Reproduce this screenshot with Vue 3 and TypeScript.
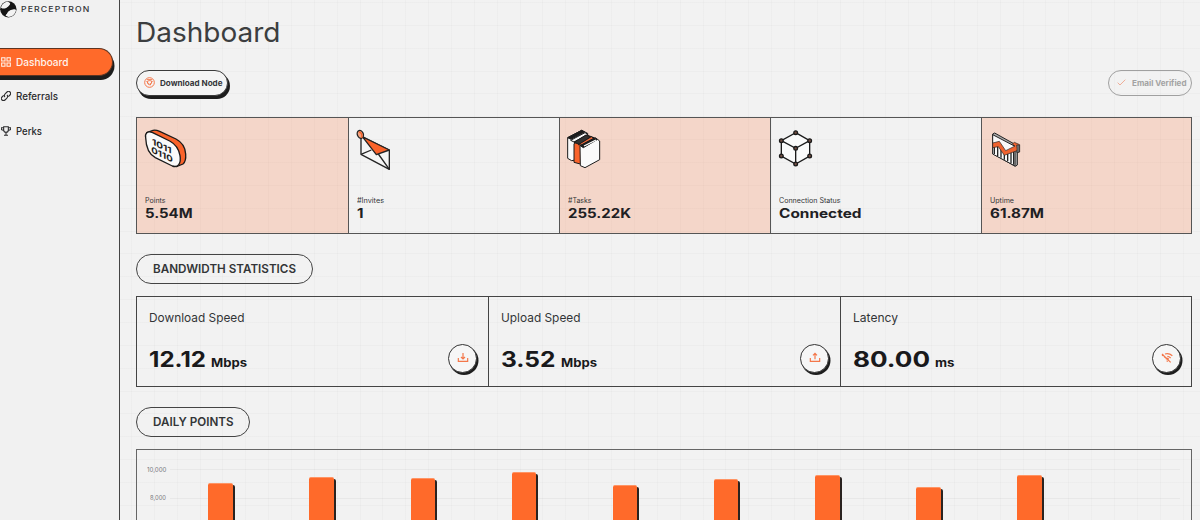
<script setup lang="ts">
interface Fitted { text: string; width: number }
interface Stat { icon: string; label: Fitted; value: Fitted; viewBox: string }
interface Speed { label: Fitted; value: Fitted; unit: Fitted; icon: string }

const nav = [
  { icon: 'grid', text: 'Dashboard', width: 52.5, active: true },
  { icon: 'link', text: 'Referrals', width: 42, active: false },
  { icon: 'cup', text: 'Perks', width: 26, active: false },
]

const stats: Stat[] = [
  { icon: 'points', label: { text: 'Points', width: 20.5 }, value: { text: '5.54M', width: 47.5 }, viewBox: '45 54 144 144' },
  { icon: 'invites', label: { text: '#Invites', width: 27 }, value: { text: '1', width: 6.5 }, viewBox: '34 54 144 144' },
  { icon: 'tasks', label: { text: '#Tasks', width: 23.5 }, value: { text: '255.22K', width: 63 }, viewBox: '39 54 144 144' },
  { icon: 'connection', label: { text: 'Connection Status', width: 61.5 }, value: { text: 'Connected', width: 82.5 }, viewBox: '42 54 144 144' },
  { icon: 'uptime', label: { text: 'Uptime', width: 24 }, value: { text: '61.87M', width: 54 }, viewBox: '45 54 144 144' },
]

const speeds: Speed[] = [
  { label: { text: 'Download Speed', width: 95.5 }, value: { text: '12.12', width: 57 }, unit: { text: 'Mbps', width: 36 }, icon: 'down' },
  { label: { text: 'Upload Speed', width: 79.5 }, value: { text: '3.52', width: 54.5 }, unit: { text: 'Mbps', width: 36 }, icon: 'up' },
  { label: { text: 'Latency', width: 45 }, value: { text: '80.00', width: 77 }, unit: { text: 'ms', width: 19.5 }, icon: 'wifi' },
]

const ticks = [{ text: '10,000', width: 19.5 }, { text: '8,000', width: 16 }]
const bars = [483.3, 477.2, 477.5, 472, 485, 478.5, 475.2, 487.2, 475.2].map((top) => 520 - top)

/* Stretches a label horizontally to the given width, like an expanded typeface. */
const vFit = {
  mounted(el: HTMLElement, binding: { value: number }) {
    const natural = el.getBoundingClientRect().width
    el.style.transform = `scaleX(${binding.value / natural})`
    el.style.marginRight = `${binding.value - natural}px`
  },
}
</script>

<template>
  <div class="app">
    <aside class="side">
      <div class="brand">
        <svg class="logo" viewBox="0 0 51 51">
          <circle cx="25" cy="25" r="24.5" fill="#151515" />
          <path d="M3 20C5 9 14 2 24 2C32 5 33 12 27 17C20 22 10 25 3 20Z" fill="#f3f3f3" />
          <path d="M17 44C19 34 23 29 32 27C40 26 46 22 48 28C46 41 35 48 26 48Z" fill="#f3f3f3" />
          <path d="M19 21C25 17 28 13 31 8L44 12C40 19 36 23 31 27C26 29 22 34 20 40L8 38C9 30 13 24 19 21Z" fill="#151515" />
        </svg>
        <span class="brand-name fit" v-fit="69.5">PERCEPTRON</span>
      </div>
      <nav class="nav">
        <a v-for="n in nav" :key="n.text" class="nav-item" :class="{ active: n.active }">
          <svg v-if="n.icon === 'grid'" class="nav-icon" viewBox="0 0 30 30">
            <path d="M2 2H12V12H2ZM18 2H28V12H18ZM2 18H12V28H2ZM18 18H28V28H18Z" />
          </svg>
          <svg v-else-if="n.icon === 'link'" class="nav-icon" viewBox="0 0 30 30">
            <path d="M12 18C8 14 10 11 13 8L18 3C21 0 25 1 27 3C30 6 29 10 27 12L22 17" />
            <path d="M18 12C22 16 20 19 17 22L12 27C9 30 5 29 3 27C0 24 1 20 3 18L8 13" />
          </svg>
          <svg v-else class="nav-icon" viewBox="0 0 30 30">
            <path d="M8 2H22V12C22 17 19 19 15 19C11 19 8 17 8 12ZM8 5H1V9C1 12 4 13 8 13M22 5H29V9C29 12 26 13 22 13M15 19V27M9 28H21" />
          </svg>
          <span class="fit" v-fit="n.width">{{ n.text }}</span>
        </a>
      </nav>
    </aside>

    <main class="main">
      <h1 class="title"><span class="fit" v-fit="144.5">Dashboard</span></h1>
      <div class="actions">
        <button class="pill node">
          <svg class="pill-icon" viewBox="0 0 33 33">
            <circle cx="16.5" cy="16.5" r="14.5" />
            <path d="M9 8H24M8 12L14 23M25 12L18 25M11 13C14 10 20 10 23 13C23 19 20 22 16 22C12 21 10 18 11 13Z" />
          </svg>
          <span class="fit" v-fit="62.5">Download Node</span>
        </button>
        <button class="pill verified">
          <svg class="pill-icon" viewBox="0 0 33 33"><path d="M5 17L12 24L28 8" /></svg>
          <span class="fit" v-fit="54.5">Email Verified</span>
        </button>
      </div>

      <section class="stats">
        <article v-for="s in stats" :key="s.icon" class="stat">
          <svg class="stat-icon" :viewBox="s.viewBox">
            <g v-if="s.icon === 'points'" stroke="#1b1b1b" stroke-width="4" stroke-linejoin="round">
              <path d="M50 68L69 61C75 59 82 61 89 64L138 87C155 96 166 112 167 132C168 145 165 157 159 162L139 170Z" fill="#f9632b" />
              <path d="M47 83C44 69 53 62 68 68L119 93C136 102 147 119 150 137C154 161 144 174 127 168L76 143C58 133 48 111 47 83Z" fill="#fafafa" />
              <g class="digits" stroke="none" fill="#1b1b1b">
                <text transform="matrix(1 .48 0 1 66 103)" textLength="59" lengthAdjust="spacingAndGlyphs">1011</text>
                <text transform="matrix(1 .48 0 1 64 127)" textLength="64" lengthAdjust="spacingAndGlyphs">0110</text>
              </g>
            </g>
            <g v-else-if="s.icon === 'invites'" fill="none" stroke="#242424" stroke-width="4" stroke-linejoin="round">
              <path d="M46 78V133L131 178V120L52 82Z" fill="#f5f5f5" />
              <path d="M46 133L77 120M98 132L131 178" />
              <path d="M50 80L131 120L92 134Z" fill="#f9632b" />
              <ellipse cx="44" cy="73" rx="9" ry="12" transform="rotate(-20 44 73)" fill="#f4a37f" />
              <path d="M40 66C48 67 50 75 48 84" stroke="#f9632b" />
            </g>
            <g v-else-if="s.icon === 'tasks'" stroke="#1b1b1b" stroke-width="3" stroke-linejoin="round">
              <path d="M38 83L80 61L98 70V143L50 152L38 145Z" fill="#fafafa" />
              <path d="M38 83L80 61L89 66L48 88Z" fill="#1b1b1b" />
              <path d="M47 91L90 68L99 73L57 96Z" fill="#f8f8f8" />
              <path d="M57 101L98 76L117 83V150L76 162L57 157Z" fill="#f9632b" />
              <path d="M57 97L93 75L106 81L75 104Z" fill="#303030" />
              <path d="M70 104L109 80L117 86L82 106Z" fill="#e96638" />
              <path d="M75 107L121 83L134 93V149L90 173L76 167Z" fill="#fafafa" />
              <path d="M76 107L119 84L126 89L85 113Z" fill="#1b1b1b" />
              <path d="M87 108L123 90" stroke="#fff" stroke-width="4" />
            </g>
            <g v-else-if="s.icon === 'connection'" stroke="#1b1b1b" stroke-width="4">
              <path d="M92 68L134 92V138L92 162L49 138V92Z" fill="#fafafa" />
              <path d="M49 92L92 115L134 92M92 115V162" fill="none" />
              <g fill="#765044" stroke-width="4">
                <circle cx="92" cy="68" r="5.5" /><circle cx="49" cy="92" r="5.5" /><circle cx="134" cy="92" r="5.5" />
                <circle cx="92" cy="115" r="5.5" /><circle cx="49" cy="138" r="5.5" /><circle cx="134" cy="138" r="5.5" />
                <circle cx="92" cy="162" r="5.5" />
              </g>
            </g>
            <g v-else stroke="#242424" stroke-width="3" stroke-linejoin="round">
              <path d="M53 72L59 69L127 107V165L121 169L53 131Z" fill="#aaa" />
              <path d="M53 74L120 109V168L53 132Z" fill="#fafafa" />
              <path d="M58 109V132M68 105V138M78 116V143M88 128V149M98 130V154M108 127V160M116 124V164" stroke-width="4" />
              <path d="M53 99L73 94L92 122L120 108L112 102L118 97L134 104V126L126 128V122L88 136L70 110L53 113Z" fill="#ef6330" stroke-width="2" />
              <path d="M125 105L133 105V126L126 128V116Z" fill="#777" stroke-width="2" />
            </g>
          </svg>
          <div class="stat-label"><span class="fit" v-fit="s.label.width">{{ s.label.text }}</span></div>
          <div class="stat-value"><span class="fit" v-fit="s.value.width">{{ s.value.text }}</span></div>
        </article>
      </section>

      <h2 class="heading bandwidth"><span class="fit" v-fit="143">BANDWIDTH STATISTICS</span></h2>
      <section class="speeds">
        <article v-for="s in speeds" :key="s.icon" class="speed">
          <div class="speed-label"><span class="fit" v-fit="s.label.width">{{ s.label.text }}</span></div>
          <div class="reading">
            <span class="number fit" v-fit="s.value.width">{{ s.value.text }}</span>
            <span class="unit fit" v-fit="s.unit.width">{{ s.unit.text }}</span>
          </div>
          <div class="round">
            <svg viewBox="0 0 36 36">
              <path v-if="s.icon === 'down'" d="M4 18V28H32V18M18 3V21M12 15L18 21L24 15" />
              <path v-else-if="s.icon === 'up'" d="M4 18V28H32V18M18 22V4M12 10L18 4L24 10" />
              <path v-else d="M3 6L29 31M12 6C20 4 28 6 34 11M3 11L8 8M9 16L13 14M19 13C23 13 26 15 29 18M14 21C18 18 21 19 23 22M17 26L20 29" />
            </svg>
          </div>
        </article>
      </section>

      <h2 class="heading daily"><span class="fit" v-fit="80.5">DAILY POINTS</span></h2>
      <section class="chart">
        <div class="axis">
          <div v-for="t in ticks" :key="t.text" class="tick">
            <div class="tick-text"><span class="fit" v-fit="t.width">{{ t.text }}</span></div>
            <i class="rule"></i>
          </div>
        </div>
        <div class="bars">
          <div v-for="(h, i) in bars" :key="i" class="bar" :style="{ height: h + 'px' }"></div>
        </div>
      </section>
    </main>
  </div>
</template>

<style>
body { background: #f1f1f1; overflow: hidden; }
</style>

<style scoped>
* { box-sizing: border-box; }
.app {
  display: flex; width: 1200px; height: 520px; overflow: hidden;
  font-family: Inter, "Liberation Sans", sans-serif; color: #333537;
}
.fit { display: inline-block; white-space: nowrap; transform-origin: 0 50%; }
.side { flex: none; width: 120px; border-right: 1px solid #444; background: #f1f1f1; }
.brand { display: flex; align-items: center; gap: 3.5px; height: 19px; }
.logo { width: 17px; height: 17px; }
.brand-name { font-size: 7.5px; font-weight: 500; letter-spacing: 1px; line-height: 10px; }
.nav { padding-top: 29px; }
.nav-item {
  display: flex; align-items: center; height: 28px; margin-bottom: 6.7px; width: 112.5px; padding-bottom: 1px;
  border: 1px solid transparent; border-left: 0; font-size: 10.3px; font-weight: 500; color: #2b2b2d;
}
.nav-item.active {
  color: #fff3ec; background: #ff6a2a; border-color: #5d3422;
  border-radius: 0 14px 14px 0; box-shadow: -2px 4px 0 #1d1d1d, 1.5px 4px 0 #1d1d1d;
}
.nav-icon { width: 10px; height: 10px; margin: 0 4.5px 0 1px; fill: none; stroke: currentColor; stroke-width: 3.2; }
.main {
  flex: 1; padding: 0 8px 0 16px; min-width: 0;
  background:
    repeating-linear-gradient(90deg, transparent 0 11px, rgba(0, 0, 0, .018) 11px 12px, transparent 12px 22.86px),
    repeating-linear-gradient(180deg, transparent 0 2px, rgba(0, 0, 0, .018) 2px 3px, transparent 3px 22.86px),
    #f2f2f2;
}
.title { margin: 0; padding-top: 14px; font-size: 27.5px; font-weight: 400; line-height: 36px; height: 50px; color: #3c3e40; }
.actions { display: flex; justify-content: space-between; margin-top: 20px; height: 27px; }
.pill {
  display: flex; align-items: center; height: 26px; border: 1px solid #3b3b3b; border-radius: 13px;
  background: #f4f4f4; padding: 0 0 1px 7px; font: 700 7.8px Inter, sans-serif; color: #35363a;
}
.node { width: 92px; box-shadow: 2px 3px 0 #1d1d1d; }
.verified { width: 84px; background: transparent; border-color: #a0a0a0; color: #a3a3a3; }
.pill-icon { width: 11px; height: 11px; margin-right: 4.5px; fill: none; stroke: #f4774a; stroke-width: 3; flex: none; }
.verified .pill-icon { stroke: #efae98; }
.stats { display: grid; grid-template-columns: 212px 211px 211px 211px 1fr; margin-top: 20px; height: 117px; border: 1px solid #555; }
.stat { padding: 10px 0 0 8px; border-right: 1px solid #555; min-width: 0; }
.stat:nth-child(2), .stat:nth-child(3) { padding-left: 7.5px; }
.stat:last-child { border-right: 0; }
.stat:nth-child(odd) { background: rgba(255, 106, 42, .2); }
.stat-icon { display: block; width: 48px; height: 48px; overflow: visible; }
.digits text { font: 700 25px Inter, sans-serif; }
.stat-label { margin-top: 20px; font-size: 7px; line-height: 10px; height: 10px; }
.stat-value { margin-top: 0; font-size: 12.6px; font-weight: 700; line-height: 15px; color: #202023; }
.heading {
  display: flex; align-items: center; margin: 20px 0 0; height: 30px; padding: 0 0 1px 16px;
  border: 1px solid #444; border-radius: 15px; font-size: 12px; font-weight: 600;
}
.bandwidth { width: 177px; }
.daily { width: 114px; }
.speeds { display: grid; grid-template-columns: 352px 352px 1fr; margin-top: 12px; height: 91px; border: 1px solid #444; }
.speed {
  display: grid; grid-template-columns: 1fr 30px; grid-template-rows: 37px 48px;
  padding: 3px 10px 0 12px; border-right: 1px solid #444;
}
.speed:last-child { border-right: 0; padding-right: 9px; }
.speed-label { grid-column: 1 / 3; font-size: 12px; line-height: 35px; }
.reading { display: flex; align-items: baseline; gap: 5px; line-height: 44px; font-weight: 700; color: #19191b; }
.number { font-size: 21.3px; }
.unit { font-size: 11.3px; }
.round {
  display: flex; align-items: center; justify-content: center; width: 29px; height: 29px; margin-top: 7px;
  border: 1px solid #333; border-radius: 50%; background: #f6f6f6; box-shadow: 1.5px 2px 0 #1d1d1d;
}
.round svg { width: 12px; height: 12px; margin-bottom: 2px; fill: none; stroke: #f4774a; stroke-width: 3.6; }
.chart { display: grid; margin-top: 12px; height: 90px; border: 1px solid #666; }
.axis, .bars { grid-area: 1 / 1; }
.axis { padding: 15.5px 11px 0 0; }
.tick { display: flex; align-items: center; height: 8px; margin-bottom: 20.5px; font-size: 6.5px; color: #77777c; }
.tick-text { width: 29px; display: flex; justify-content: flex-end; line-height: 8px; }
.rule { flex: 1; height: 1px; margin-left: 4px; background: rgba(0, 0, 0, .04); }
.bars { display: flex; align-items: flex-end; gap: 76.63px; height: 70px; padding-left: 71.3px; }
.bar { flex: none; width: 24.5px; background: #ff6a2a; border-radius: 2px 2px 0 0; border-top: 1px solid #ff9464; box-shadow: 2px 2px 0 #2a2320; }
</style>
